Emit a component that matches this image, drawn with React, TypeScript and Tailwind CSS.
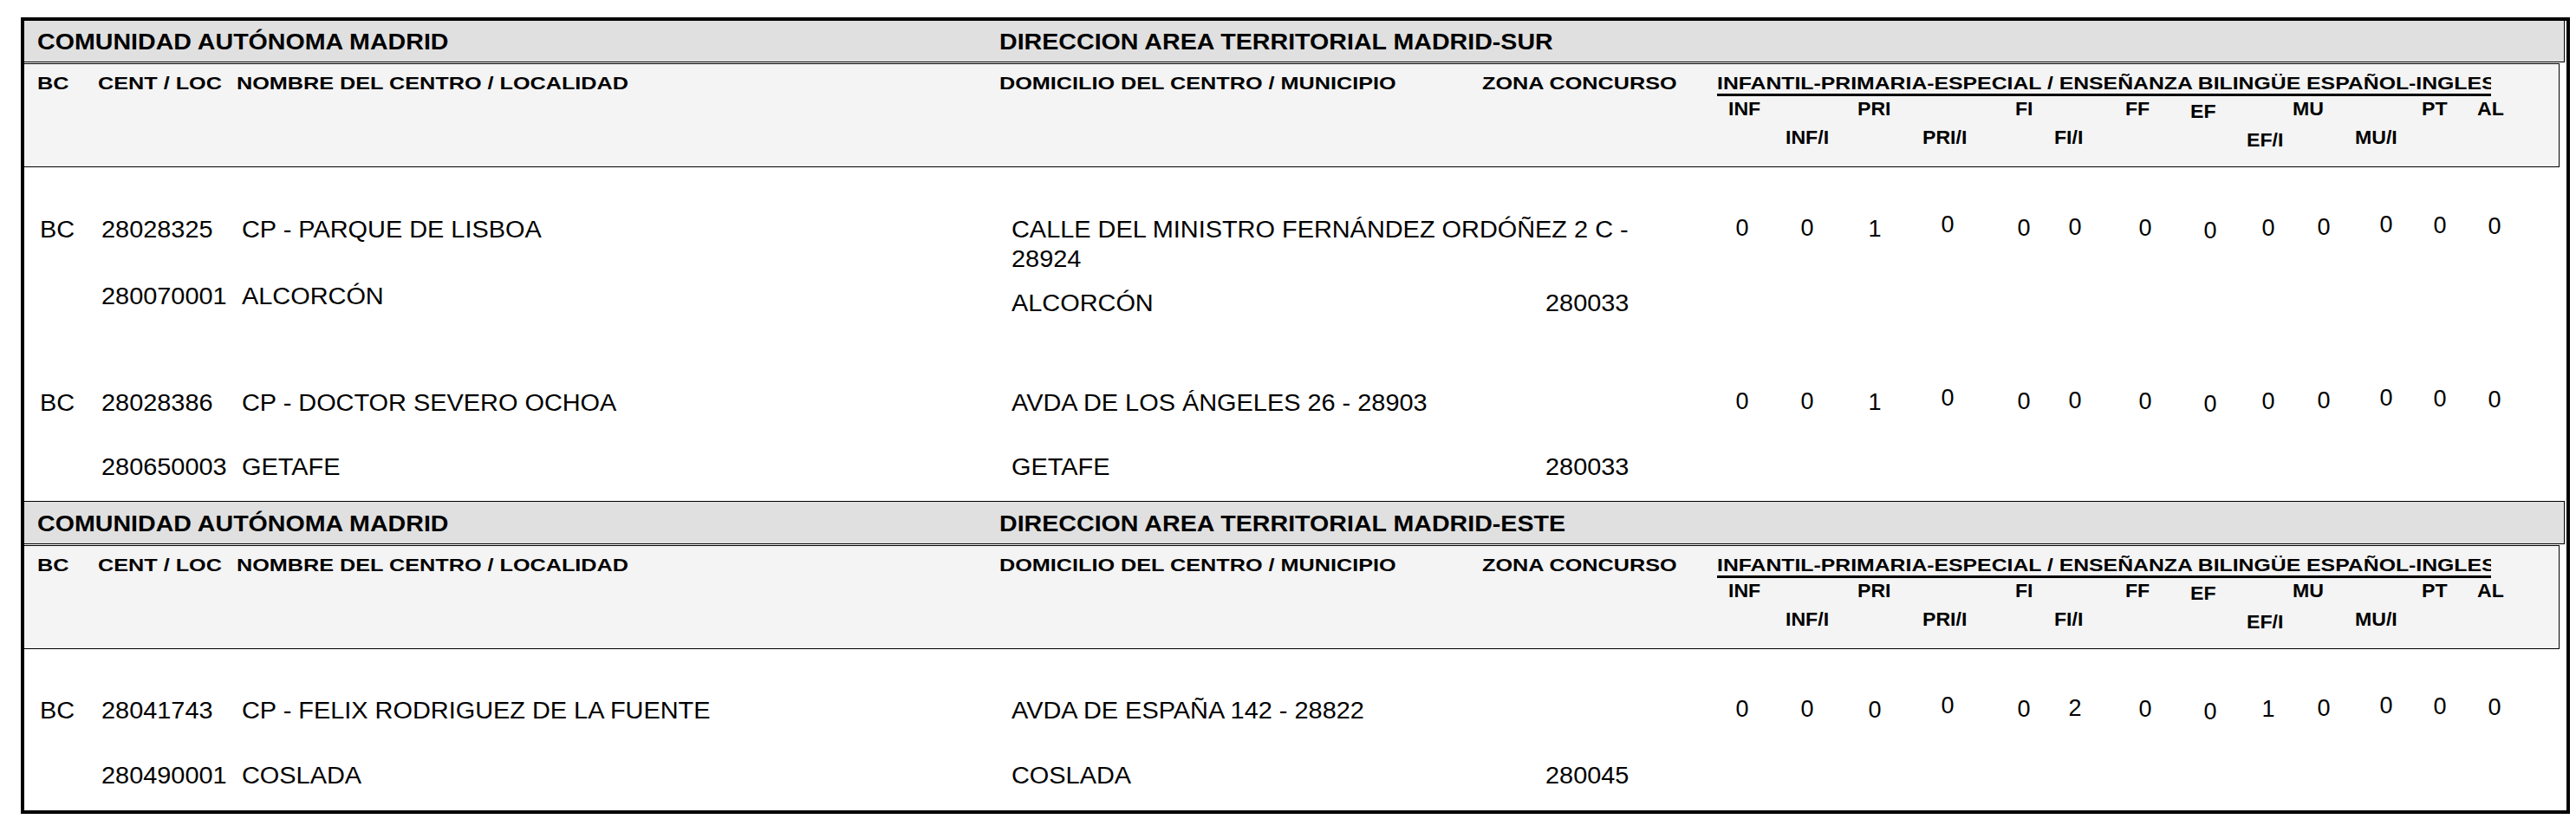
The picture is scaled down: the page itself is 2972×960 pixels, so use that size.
import React from "react";

type School = {
  bc: string;
  cent: string;
  name: string;
  loc: string;
  locName: string;
  addr: string[];
  muni: string;
  zona: string;
  vals: number[];
  locMt: string;
  addr2Mt: string;
  muniMt: string;
  zonaMt: string;
};

const digitMl = [
  "",
  "ml-[35px]",
  "ml-[38px]",
  "ml-[44px]",
  "ml-[48px]",
  "ml-[19px]",
  "ml-[41px]",
  "ml-[35px]",
  "ml-[27px]",
  "ml-[24px]",
  "ml-[32px]",
  "ml-[22px]",
  "ml-[23px]",
];
const digitMt = [
  "mt-[6px]",
  "mt-[6px]",
  "mt-[7px]",
  "mt-[2px]",
  "mt-[6px]",
  "mt-[5px]",
  "mt-[6px]",
  "mt-[9px]",
  "mt-[6px]",
  "mt-[5px]",
  "mt-[2px]",
  "mt-[3px]",
  "mt-[4px]",
];

function D({ children }: { children: React.ReactNode }) {
  return (
    <span className="inline-block whitespace-nowrap origin-left scale-x-[1.07]">
      {children}
    </span>
  );
}

function TitleBand({ region, first }: { region: string; first: boolean }) {
  return (
    <div
      className={
        first
          ? "flex h-[48px] mr-[2px] bg-[#e0e0e0] border-b border-r border-black pl-[15px] pt-[11px] text-[26px] font-bold leading-none"
          : "flex h-[50px] mr-[2px] bg-[#e0e0e0] border-y border-r border-black pl-[15px] pt-[12px] text-[26px] font-bold leading-none"
      }
    >
      <div className="w-[1110px]">
        <span className="inline-block whitespace-nowrap origin-left scale-x-[1.1]">
          COMUNIDAD AUTÓNOMA MADRID
        </span>
      </div>
      <div>
        <span className="inline-block whitespace-nowrap origin-left scale-x-[1.1]">
          DIRECCION AREA TERRITORIAL {region}
        </span>
      </div>
    </div>
  );
}

function HL({ children, w }: { children: React.ReactNode; w: string }) {
  return (
    <div className={w}>
      <span className="inline-block whitespace-nowrap origin-left scale-x-[1.23]">
        {children}
      </span>
    </div>
  );
}

function SubLabel({ children, cls }: { children: React.ReactNode; cls: string }) {
  return (
    <div className={cls}>
      <span className="inline-block whitespace-nowrap origin-left scale-x-[1.05]">
        {children}
      </span>
    </div>
  );
}

function HeaderBox() {
  return (
    <div className="mt-px mr-[8px] h-[120px] border-y border-r border-black bg-[#f4f4f4] flex pl-[15px] font-bold leading-none">
      <div className="flex pt-[12px] text-[20.5px]">
        <HL w="w-[70px]">BC</HL>
        <HL w="w-[160px]">CENT / LOC</HL>
        <HL w="w-[880px]">NOMBRE DEL CENTRO / LOCALIDAD</HL>
        <HL w="w-[557px]">DOMICILIO DEL CENTRO / MUNICIPIO</HL>
        <HL w="w-[271px]">ZONA CONCURSO</HL>
      </div>
      <div className="flex flex-col pt-[11px] text-[21px]">
        <div className="w-[893px] overflow-hidden border-b-[3px] border-black pb-[2px]">
          <span className="inline-block whitespace-nowrap origin-left scale-x-[1.18]">
            INFANTIL-PRIMARIA-ESPECIAL / ENSEÑANZA BILINGÜE ESPAÑOL-INGLES
          </span>
        </div>
        <div className="flex mt-[4px] text-[22px]">
          <SubLabel cls="ml-[13px] w-[149px]">INF</SubLabel>
          <SubLabel cls="w-[182px]">PRI</SubLabel>
          <SubLabel cls="w-[127px]">FI</SubLabel>
          <SubLabel cls="w-[75px]">FF</SubLabel>
          <SubLabel cls="w-[118px] mt-[3px]">EF</SubLabel>
          <SubLabel cls="w-[149px]">MU</SubLabel>
          <SubLabel cls="w-[64px]">PT</SubLabel>
          <SubLabel cls="">AL</SubLabel>
        </div>
        <div className="flex mt-[8px] text-[22px]">
          <SubLabel cls="ml-[79px] w-[158px]">INF/I</SubLabel>
          <SubLabel cls="w-[152px]">PRI/I</SubLabel>
          <SubLabel cls="w-[222px]">FI/I</SubLabel>
          <SubLabel cls="w-[125px] mt-[3px]">EF/I</SubLabel>
          <SubLabel cls="">MU/I</SubLabel>
        </div>
      </div>
    </div>
  );
}

function SchoolRow({ s, cls }: { s: School; cls: string }) {
  return (
    <div className={`flex items-start pl-[18px] text-[27px] leading-none ${cls}`}>
      <div className="w-[71px] mt-[8px]">
        <D>{s.bc}</D>
      </div>
      <div className="w-[162px] flex flex-col">
        <div className="mt-[8px]">
          <D>{s.cent}</D>
        </div>
        <div className={s.locMt}>
          <D>{s.loc}</D>
        </div>
      </div>
      <div className="w-[888px] flex flex-col">
        <div className="mt-[8px]">
          <D>{s.name}</D>
        </div>
        <div className={s.locMt}>
          <D>{s.locName}</D>
        </div>
      </div>
      <div className="w-[616px] flex flex-col">
        <div className="mt-[8px]">
          <D>{s.addr[0]}</D>
        </div>
        {s.addr[1] ? (
          <div className={s.addr2Mt}>
            <D>{s.addr[1]}</D>
          </div>
        ) : null}
        <div className={s.muniMt}>
          <D>{s.muni}</D>
        </div>
      </div>
      <div className={`w-[207px] ${s.zonaMt}`}>
        <D>{s.zona}</D>
      </div>
      <div className="flex items-start">
        {s.vals.map((v, i) => (
          <div key={i} className={`w-[40px] text-center ${digitMl[i]} ${digitMt[i]}`}>
            {v}
          </div>
        ))}
      </div>
    </div>
  );
}

const schoolA: School = {
  bc: "BC",
  cent: "28028325",
  name: "CP - PARQUE DE LISBOA",
  loc: "280070001",
  locName: "ALCORCÓN",
  addr: ["CALLE DEL MINISTRO FERNÁNDEZ ORDÓÑEZ 2 C -", "28924"],
  muni: "ALCORCÓN",
  zona: "280033",
  vals: [0, 0, 1, 0, 0, 0, 0, 0, 0, 0, 0, 0, 0],
  locMt: "mt-[50px]",
  addr2Mt: "mt-[7px]",
  muniMt: "mt-[24px]",
  zonaMt: "mt-[93px]",
};

const schoolB: School = {
  bc: "BC",
  cent: "28028386",
  name: "CP - DOCTOR SEVERO OCHOA",
  loc: "280650003",
  locName: "GETAFE",
  addr: ["AVDA DE LOS ÁNGELES 26 - 28903"],
  muni: "GETAFE",
  zona: "280033",
  vals: [0, 0, 1, 0, 0, 0, 0, 0, 0, 0, 0, 0, 0],
  locMt: "mt-[47px]",
  addr2Mt: "",
  muniMt: "mt-[47px]",
  zonaMt: "mt-[82px]",
};

const schoolC: School = {
  bc: "BC",
  cent: "28041743",
  name: "CP - FELIX RODRIGUEZ DE LA FUENTE",
  loc: "280490001",
  locName: "COSLADA",
  addr: ["AVDA DE ESPAÑA 142 - 28822"],
  muni: "COSLADA",
  zona: "280045",
  vals: [0, 0, 0, 0, 0, 2, 0, 0, 1, 0, 0, 0, 0],
  locMt: "mt-[48px]",
  addr2Mt: "",
  muniMt: "mt-[48px]",
  zonaMt: "mt-[83px]",
};

export default function App() {
  return (
    <div className="w-[2972px] h-[960px] bg-white pt-[20px] pl-[24px] text-black font-['Liberation_Sans',Arial,sans-serif]">
      <div className="w-[2941px] h-[919px] border-4 border-black flex flex-col">
        <TitleBand region="MADRID-SUR" first={true} />
        <HeaderBox />
        <div className="h-[385px] pt-[51px]">
          <SchoolRow s={schoolA} cls="" />
          <SchoolRow s={schoolB} cls="mt-[80px]" />
        </div>
        <TitleBand region="MADRID-ESTE" first={false} />
        <HeaderBox />
        <div className="h-[186px] pt-[50px]">
          <SchoolRow s={schoolC} cls="" />
        </div>
      </div>
    </div>
  );
}
